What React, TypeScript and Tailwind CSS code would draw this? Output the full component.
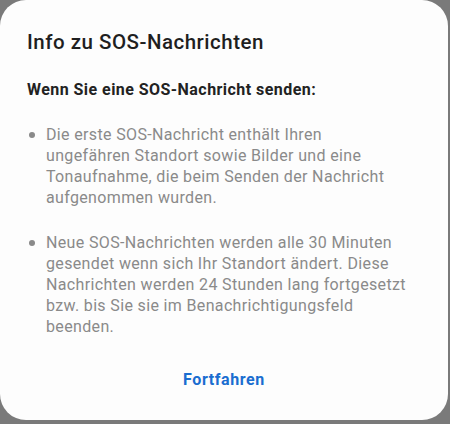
import React from 'react';

const bullets: string[][] = [
  [
    'Die erste SOS-Nachricht enthält Ihren',
    'ungefähren Standort sowie Bilder und eine',
    'Tonaufnahme, die beim Senden der Nachricht',
    'aufgenommen wurden.',
  ],
  [
    'Neue SOS-Nachrichten werden alle 30 Minuten',
    'gesendet wenn sich Ihr Standort ändert. Diese',
    'Nachrichten werden 24 Stunden lang fortgesetzt',
    'bzw. bis Sie sie im Benachrichtigungsfeld',
    'beenden.',
  ],
];

const App: React.FC = () => {
  return (
    <div
      className="w-[450px] h-[424px] bg-[#7a7a7a] overflow-hidden"
      style={{ fontFamily: 'Roboto, "Noto Sans", sans-serif' }}
    >
      <div className="w-[448px] h-[420px] bg-[#fdfdfd] rounded-[26px] flex flex-col pt-[28px] px-[27px]">
        <h1 className="text-[20.5px] leading-[28px] font-medium tracking-[0.5px] text-[#1f1f1f]">
          Info zu SOS-Nachrichten
        </h1>
        <h2 className="mt-[23px] text-[16px] leading-[22px] font-bold tracking-[0.45px] text-[#222]">
          Wenn Sie eine SOS-Nachricht senden:
        </h2>

        <ul className="mt-[23px] flex flex-col gap-[24px]">
          {bullets.map((lines, i) => (
            <li key={i} className="flex text-[16px] leading-[21px] tracking-[0.35px] text-[#8a8a8a]">
              <span className="w-[19px] shrink-0 flex justify-start pt-[8px] pl-[2px]">
                <span className="w-[6px] h-[6px] rounded-full bg-[#8a8a8a]" />
              </span>
              <span className="whitespace-nowrap">
                {lines.map((l, j) => (
                  <span key={j} className="block">
                    {l}
                  </span>
                ))}
              </span>
            </li>
          ))}
        </ul>

        <div className="mt-[32px] flex justify-center">
          <button type="button" className="text-[16px] leading-[22px] font-bold tracking-[0.6px] text-[#1a6dd0]">
            Fortfahren
          </button>
        </div>
      </div>
    </div>
  );
};

export default App;
